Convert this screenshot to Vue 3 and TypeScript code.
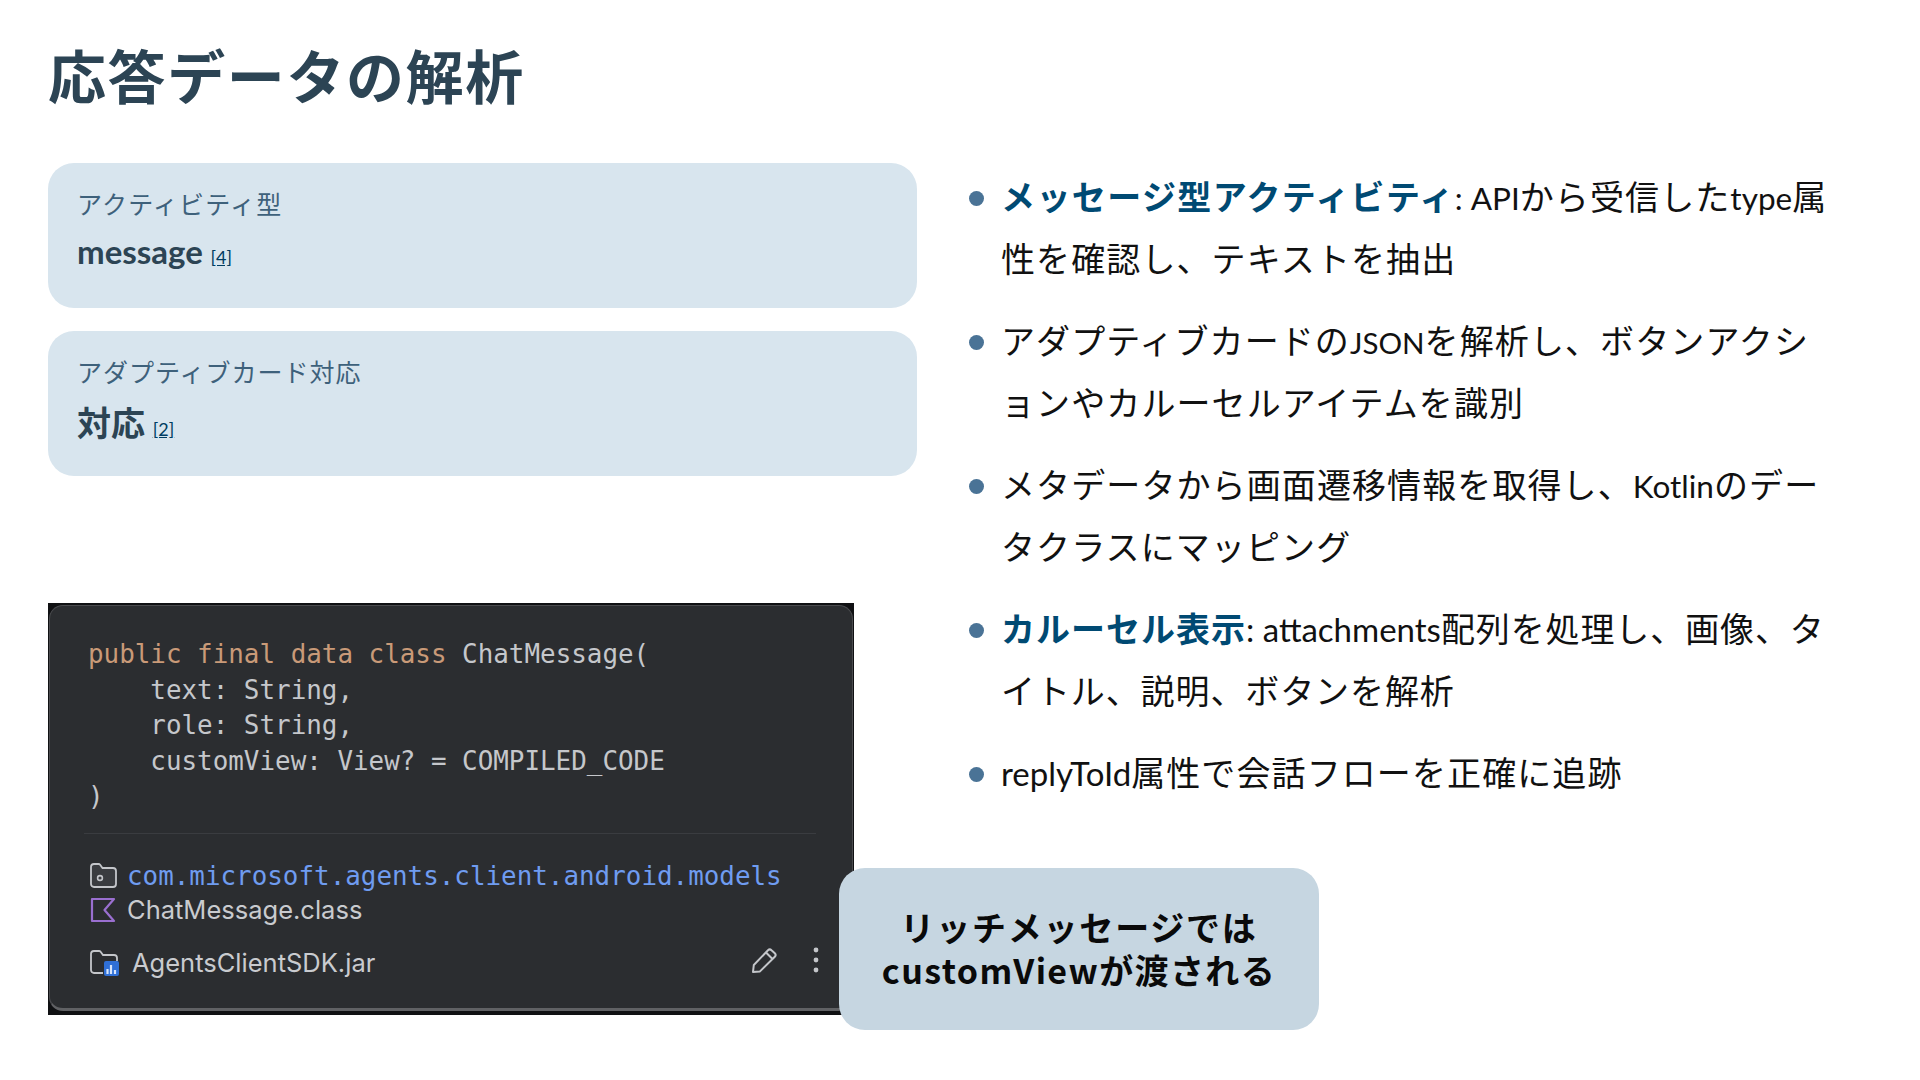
<script setup lang="ts">
const codeLines: { text: string; kw?: string }[] = [
  { kw: 'public final data class ', text: 'ChatMessage(' },
  { text: '    text: String,' },
  { text: '    role: String,' },
  { text: '    customView: View? = COMPILED_CODE' },
  { text: ')' },
]
</script>

<template>
  <div class="slide">
    <h1 class="title">応答データの解析</h1>
    <div class="columns">
      <div class="left">
        <div class="stat">
          <div class="stat-label">アクティビティ型</div>
          <div class="stat-value"><span class="lat">message</span> <a class="ref">[4]</a></div>
        </div>
        <div class="stat">
          <div class="stat-label tight">アダプティブカード対応</div>
          <div class="stat-value low">対応 <a class="ref">[2]</a></div>
        </div>
        <div class="ide-frame">
          <div class="ide">
            <pre class="code"><template v-for="(l, i) in codeLines" :key="i"><span v-if="l.kw" class="kw">{{ l.kw }}</span>{{ l.text }}{{ i < codeLines.length - 1 ? '\n' : '' }}</template></pre>
            <div class="divider"></div>
            <div class="row pkg-row">
              <svg class="ico" width="27" height="25" viewBox="0 0 27 25" fill="none">
                <path d="M1 4a3 3 0 0 1 3-3h4.5a2 2 0 0 1 1.6.8L12.5 5H23a3 3 0 0 1 3 3v13a3 3 0 0 1-3 3H4a3 3 0 0 1-3-3Z" stroke="#c4c6ca" stroke-width="1.8" fill="#3a3c40"/>
                <circle cx="10" cy="15" r="2.4" stroke="#c4c6ca" stroke-width="1.6"/>
              </svg>
              <span class="pkg">com.microsoft.agents.client.android.models</span>
            </div>
            <div class="row class-row">
              <svg class="ico" width="27" height="26" viewBox="0 0 27 26" fill="none">
                <path d="M2 2h22l-9.5 11L24 24H2Z" stroke="#9a6fd0" stroke-width="2.2" stroke-linejoin="round"/>
              </svg>
              <span class="file">ChatMessage.class</span>
            </div>
            <div class="row jar-row">
              <svg class="ico" width="29" height="26" viewBox="0 0 29 26" fill="none">
                <path d="M13 23H4a3 3 0 0 1-3-3V4a3 3 0 0 1 3-3h5a2 2 0 0 1 1.6.8L13 5h11a3 3 0 0 1 3 3v3" stroke="#c4c6ca" stroke-width="1.8"/>
                <rect x="14" y="11" width="15" height="15" rx="2" fill="#2f6fd6"/>
                <path d="M17.5 24v-5M21 24v-9M25 24v-4" stroke="#d6e4fb" stroke-width="2.2"/>
              </svg>
              <span class="file jar">AgentsClientSDK.jar</span>
              <svg class="pencil" width="27" height="27" viewBox="0 0 27 27" fill="none">
                <path d="M2 25l.8-7L17 3.2a2.5 2.5 0 0 1 3.5 0l3.3 3a2.5 2.5 0 0 1 0 3.5L9 24.4Z M15 5.5l6.5 6.5" stroke="#c4c6ca" stroke-width="2" stroke-linejoin="round"/>
              </svg>
              <svg class="dots" width="6" height="26" viewBox="0 0 6 26" fill="#c4c6ca">
                <circle cx="3" cy="3" r="2.4"/><circle cx="3" cy="13" r="2.4"/><circle cx="3" cy="23" r="2.4"/>
              </svg>
            </div>
          </div>
        </div>
      </div>
      <ul class="points">
        <li><strong>メッセージ型アクティビティ</strong><span class="lat n">: API</span>から受信した<span class="lat n">type</span>属性を確認し、テキストを抽出</li>
        <li>アダプティブカードの<span class="lat caps">JSON</span>を解析し、ボタンアクションやカルーセルアイテムを識別</li>
        <li>メタデータから画面遷移情報を取得し、<span class="lat n">Kotlin</span>のデータクラスにマッピング</li>
        <li class="wide"><strong class="short">カルーセル表示</strong><span class="lat">: attachments</span>配列を処理し、画像、タイトル、説明、ボタンを解析</li>
        <li><span class="lat">replyToId</span>属性で会話フローを正確に追跡</li>
      </ul>
    </div>
    <div class="callout"><span>リッチメッセージでは</span><span class="c2">customViewが渡される</span></div>
  </div>
</template>

<style>
html, body { margin: 0; background: #fff; }
</style>

<style scoped>
.slide {
  position: relative;
  width: 1920px;
  height: 1080px;
  box-sizing: border-box;
  padding: 38px 84px 0 48px;
  background: #fff;
  overflow: hidden;
  font-family: "Noto Sans CJK JP", Lato, sans-serif;
}
.lat { font-family: Lato, "Noto Sans CJK JP", sans-serif; line-height: 1; letter-spacing: 0; }
.title {
  margin: 0 0 53px;
  font-size: 58px;
  line-height: 72px;
  font-weight: 700;
  letter-spacing: 1.6px;
  color: #2c4454;
}
.columns {
  display: grid;
  grid-template-columns: 869px 869px;
  column-gap: 50px;
}
.left { display: flex; flex-direction: column; }
.stat {
  height: 145px;
  box-sizing: border-box;
  margin-bottom: 23px;
  padding: 22px 29px 0;
  background: #d8e5ee;
  border-radius: 26px;
}
.stat-label {
  font-size: 25px;
  line-height: 36px;
  letter-spacing: 1.2px;
  color: #3e617b;
}
.stat-label.tight { letter-spacing: 1px; }
.stat-value {
  margin-top: 6px;
  font-size: 34px;
  line-height: 46px;
  font-weight: 700;
  color: #2c4454;
}
.stat-value.low { margin-top: 10px; }
.stat-value .lat { font-size: 33px; }
.ref {
  font-size: 18px;
  font-weight: 400;
  color: #003d62;
  text-decoration: underline;
  font-family: Lato, sans-serif;
}
.ide-frame {
  margin-top: 104px;
  width: 806px;
  height: 412px;
  box-sizing: border-box;
  padding: 2px 1px 4px;
  background: #101113;
}
.ide {
  height: 100%;
  box-sizing: border-box;
  padding: 31px 36px 0 38px;
  background: #2b2d30;
  border: 1.5px solid #4a4b4e;
  border-bottom: 3px solid #606164;
  border-radius: 14px;
}
.code {
  margin: 0;
  font-family: "DejaVu Sans Mono", monospace;
  font-size: 25.9px;
  line-height: 35.6px;
  color: #c5c7cb;
}
.kw { color: #c99a78; }
.divider {
  height: 1px;
  margin: 18px 0 0 -4px;
  background: #3a3c40;
}
.row { display: flex; align-items: center; }
.pkg-row { margin-top: 25px; height: 34px; }
.class-row { height: 34px; }
.jar-row { margin-top: 19px; height: 34px; }
.ico { flex: none; margin-left: 2px; margin-right: 10px; }
.pkg {
  font-family: "DejaVu Sans Mono", monospace;
  font-size: 25.9px;
  color: #6f9cf0;
}
.file {
  font-family: Inter, sans-serif;
  font-size: 25.5px;
  color: #c9cbcf;
}
.jar { margin-left: 3px; }
.pencil { margin-left: auto; margin-right: 35px; margin-bottom: 5px; }
.dots { margin-right: -3px; margin-bottom: 5px; }
.points {
  list-style: none;
  margin: 0;
  padding: 2px 0 0;
  line-height: 61.5px;
  font-size: 34px;
  letter-spacing: 1.1px;
  line-break: loose;
  color: #111;
}
.points .lat { font-size: 33px; }
.points .lat.n { font-size: 31.5px; }
.points .lat.caps { font-size: 29.5px; }
.points li {
  position: relative;
  padding-left: 34px;
  margin-bottom: 21px;
}
.points li.wide { letter-spacing: 0.9px; }
.points li::before {
  content: "";
  position: absolute;
  left: 2px;
  top: 26px;
  width: 15px;
  height: 15px;
  border-radius: 50%;
  background: #4a7396;
}
.points strong { color: #004a73; font-weight: 700; letter-spacing: 1.4px; }
.points strong.short { letter-spacing: 1px; }
.callout {
  position: absolute;
  left: 839px;
  top: 868px;
  width: 480px;
  height: 162px;
  box-sizing: border-box;
  padding-bottom: 3px;
  display: flex;
  flex-direction: column;
  align-items: center;
  justify-content: center;
  text-align: center;
  background: #c6d6e1;
  border-radius: 26px;
  font-size: 34px;
  line-height: 43px;
  font-weight: 700;
  letter-spacing: 1.8px;
  color: #0a0a0a;
}
.c2 { letter-spacing: 1.4px; }
</style>
